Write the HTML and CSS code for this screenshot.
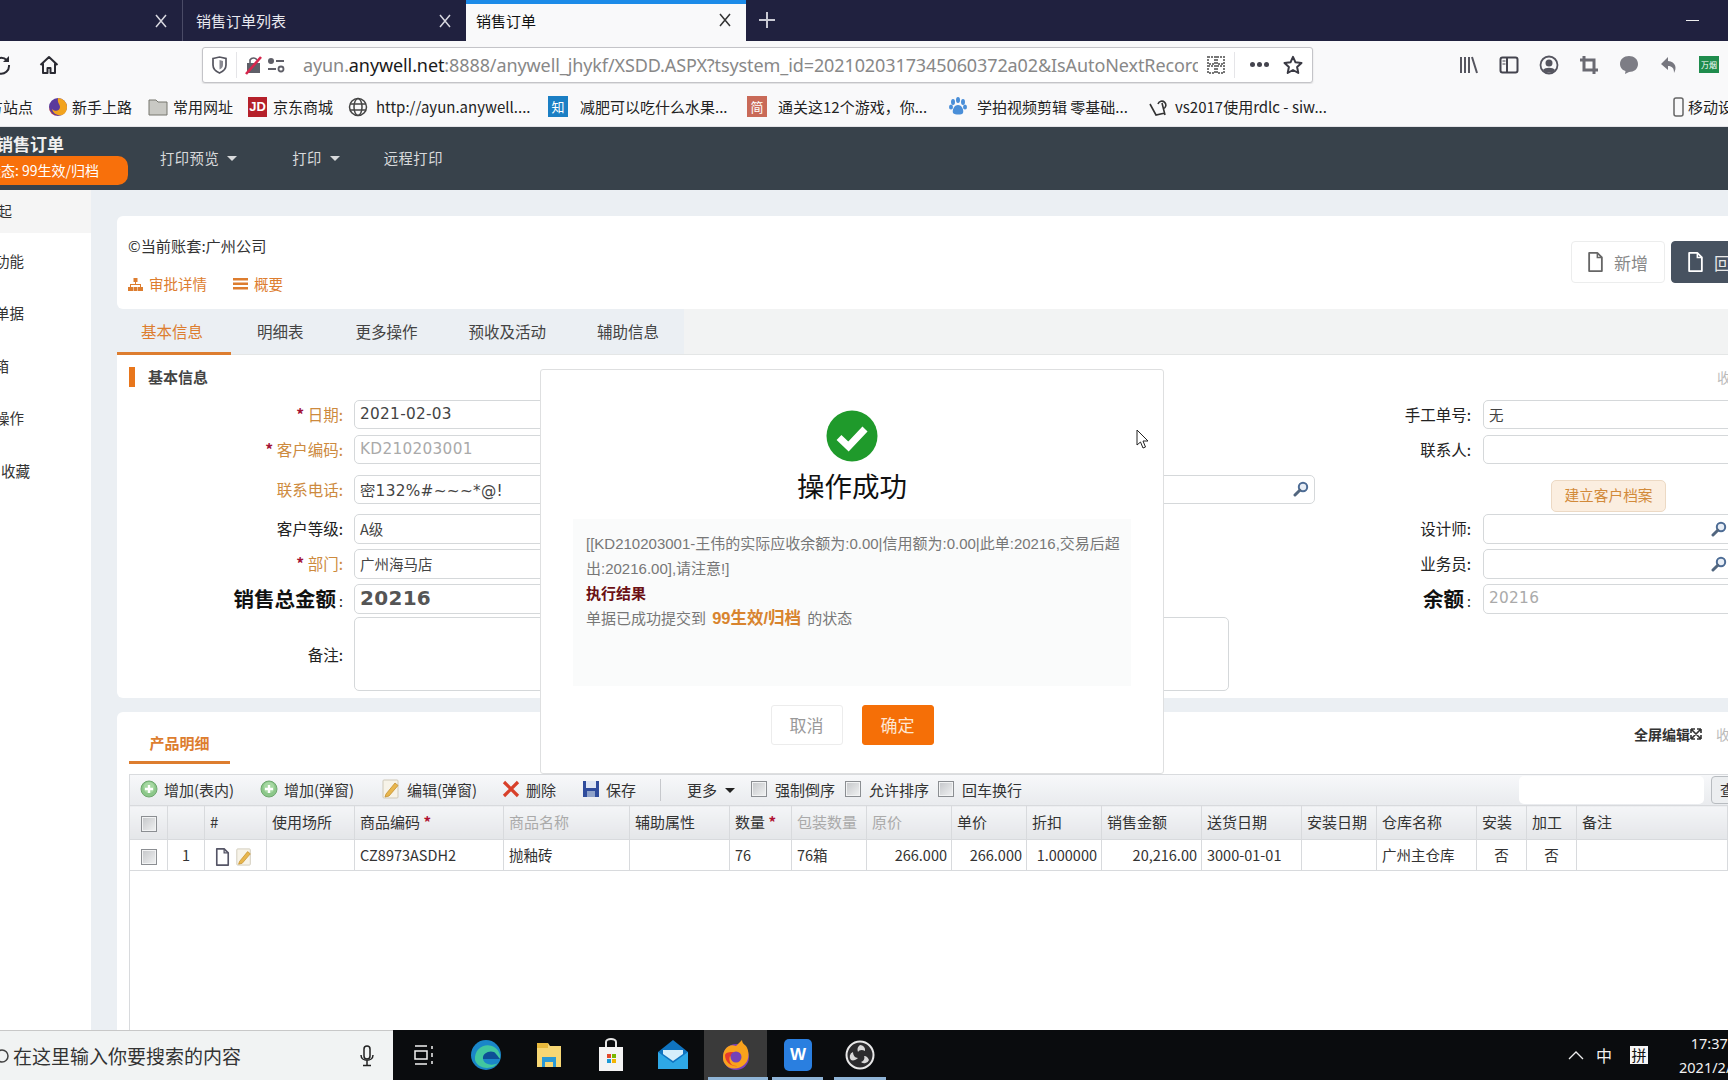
FILE: index.html
```html
<!DOCTYPE html>
<html lang="zh-CN">
<head>
<meta charset="utf-8">
<title>销售订单</title>
<link rel="stylesheet" href="styles.css">
</head>
<body>
<svg class="defs" width="0" height="0" aria-hidden="true">
  <symbol id="i-search" viewBox="0 0 16 16"><circle cx="10" cy="6" r="4.2" fill="#e8eef6" stroke="#4d6c95" stroke-width="2"/><path d="M6.8 9.2 2 14" stroke="#52667f" stroke-width="3" stroke-linecap="round"/></symbol>
  <symbol id="i-add" viewBox="0 0 18 18"><circle cx="9" cy="9" r="8" fill="#8cc78a" stroke="#6fa86f"/><circle cx="9" cy="7.5" r="5.5" fill="#a6d8a2"/><path d="M9 5v8M5 9h8" stroke="#fff" stroke-width="2.4"/></symbol>
  <symbol id="i-doc" viewBox="0 0 18 22"><path d="M2 1h9l5 5v15H2z" fill="none" stroke="currentColor" stroke-width="2" stroke-linejoin="round"/><path d="M11 1v5h5" fill="none" stroke="currentColor" stroke-width="1.6"/></symbol>
  <symbol id="i-edit" viewBox="0 0 20 20"><rect x="2" y="1" width="15" height="18" rx="1" fill="#f7f3e8" stroke="#cfc9b8"/><path d="M5 15 14 4l3 2.5L8 17l-4 1z" fill="#e8b64d" stroke="#c48f2d" stroke-width=".8"/></symbol>
  <symbol id="i-x" viewBox="0 0 14 14"><path d="M2 1l10 12M12 1 2 13" fill="none" stroke="currentColor" stroke-width="1.500"/></symbol>
</svg>

<header class="tabbar">
  <div class="tab tab-first"><svg class="tab-x" width="14" height="14"><use href="#i-x"/></svg></div>
  <div class="tab tab-mid"><span class="tab-label">销售订单列表</span><svg class="tab-x" width="14" height="14"><use href="#i-x"/></svg></div>
  <div class="tab tab-active"><span class="tab-label">销售订单</span><svg class="tab-x" width="14" height="14"><use href="#i-x"/></svg></div>
  <svg class="tab-plus" width="18" height="18" viewBox="0 0 18 18"><path d="M9 1v16M1 9h16" stroke="#c9cad4" stroke-width="2"/></svg>
  <div class="win-min"></div>
</header>

<nav class="toolbar">
  <svg class="reload" width="20" height="20" viewBox="0 0 20 20"><path d="M16 5.5A8 8 0 1 0 18 10" fill="none" stroke="#2b2b33" stroke-width="2"/><path d="M18 1v6h-6z" fill="#2b2b33"/></svg>
  <svg class="home" width="20" height="20" viewBox="0 0 20 20"><path d="M1.500 10 10 2l8.500 8M4 8.500V18h4.500v-5h3v5H16V8.500" fill="none" stroke="#2b2b33" stroke-width="2" stroke-linejoin="round"/></svg>
  <div class="urlbar">
    <svg class="shield" width="15" height="18" viewBox="0 0 15 18"><path d="M1 2.500 7.500 1 14 2.500V9c0 4-3 6.500-6.500 8C4 15.500 1 13 1 9z" fill="none" stroke="#55555f" stroke-width="1.700"/><path d="M7.500 4 11 5v4c0 2-1.500 3.500-3.500 4.500z" fill="#8a8a92"/></svg>
    <span class="url-sep"></span>
    <svg class="lock-off" width="18" height="20" viewBox="0 0 18 20"><rect x="2" y="8" width="13" height="10" fill="#5f5f68"/><path d="M5 8V5a4 4 0 0 1 7 0" fill="none" stroke="#5f5f68" stroke-width="1.600"/><path d="M1 19 16 2" stroke="#d7264d" stroke-width="2.600"/></svg>
    <svg class="perm" width="18" height="16" viewBox="0 0 18 16"><circle cx="4" cy="4" r="3" fill="#5f5f68"/><path d="M9 4h8M1 12h8" stroke="#5f5f68" stroke-width="2"/><circle cx="14" cy="12" r="2.500" fill="none" stroke="#5f5f68" stroke-width="1.800"/></svg>
    <div class="url-text">ayun.<b>anywell.net</b>:8888/anywell_jhykf/XSDD.ASPX?tsystem_id=2021020317345060372a02&amp;IsAutoNextRecord=1</div>
    <svg class="qr" width="18" height="18" viewBox="0 0 18 18"><path d="M1 1h7v7H1zM10 1h7v7h-7zM1 10h7v7H1zM10 10h7v7h-7z" fill="none" stroke="#777" stroke-width="2" stroke-dasharray="2 1"/></svg>
    <span class="url-sep url-sep-r"></span>
    <span class="dots"><i></i><i></i><i></i></span>
    <svg class="star" width="20" height="20" viewBox="0 0 20 20"><path d="m10 1.800 2.500 5.500 6 .7-4.400 4 1.200 6L10 15l-5.300 3 1.200-6-4.400-4 6-.7z" fill="none" stroke="#3a3a44" stroke-width="2" stroke-linejoin="round"/></svg>
  </div>
  <div class="tools">
    <svg width="20" height="20" viewBox="0 0 20 20"><path d="M2 2v16M6 2v16M10 2v16M13 2l5 16" stroke="#55555f" stroke-width="2" fill="none"/></svg>
    <svg width="20" height="20" viewBox="0 0 20 20"><rect x="1.500" y="2.500" width="17" height="15" rx="2" fill="none" stroke="#44444e" stroke-width="2"/><path d="M8 3v14" stroke="#44444e" stroke-width="2"/><path d="M3.500 6h3M3.500 9h3" stroke="#44444e"/></svg>
    <svg width="20" height="20" viewBox="0 0 20 20"><circle cx="10" cy="10" r="8.500" fill="none" stroke="#55555f" stroke-width="1.800"/><circle cx="10" cy="8" r="3.500" fill="#55555f"/><path d="M4 15c2-3 10-3 12 0l-3 2.500H7z" fill="#55555f"/></svg>
    <svg width="20" height="20" viewBox="0 0 20 20"><path d="M5 1v14h14M1 5h14v14" fill="none" stroke="#6a6a72" stroke-width="3"/></svg>
    <svg width="20" height="20" viewBox="0 0 20 20"><path d="M10 1c5 0 9 3 9 8s-4 8-9 8l-4 2 .5-3C3 15 1 12 1 9c0-5 4-8 9-8z" fill="#7d7d85"/></svg>
    <svg width="20" height="20" viewBox="0 0 20 20"><path d="M9 2 2 9l7 6v-4c4 0 6 2 6 7 3-5 2-11-6-12z" fill="#77777f"/></svg>
    <span class="wan">万烟</span>
  </div>
</nav>

<nav class="bookmarks">
  <span class="bm bm-a">火狐官方站点</span>
  <span class="bm bm-b"><svg width="20" height="20" viewBox="0 0 20 20"><circle cx="10" cy="10" r="9" fill="#5a3a9c"/><path d="M10 1a9 9 0 0 1 9 9c0 4-2 7-5 8-4 1-9-1-10-6 3 3 8 2 8-2 0-3-3-4-2-9z" fill="#f2a31e"/><path d="M1 10c1 5 4 8 9 9-5 0-9-4-9-9z" fill="#d93a2b"/></svg>新手上路</span>
  <span class="bm bm-c"><svg width="20" height="18" viewBox="0 0 20 18"><path d="M1 2h7l2 2h9v13H1z" fill="#c9c9c4" stroke="#77776f"/></svg>常用网址</span>
  <span class="bm bm-d"><span class="jd">JD</span>京东商城</span>
  <span class="bm bm-e"><svg width="20" height="20" viewBox="0 0 20 20"><g fill="none" stroke="#444" stroke-width="1.500"><circle cx="10" cy="10" r="8.500"/><ellipse cx="10" cy="10" rx="4" ry="8.500"/><path d="M2 7h16M2 13h16"/></g></svg>http://ayun.anywell....</span>
  <span class="bm bm-f"><span class="zhi">知</span>减肥可以吃什么水果...</span>
  <span class="bm bm-g"><span class="jian">简</span>通关这12个游戏，你...</span>
  <span class="bm bm-h"><svg width="18" height="20" viewBox="0 0 18 20"><g fill="#4a8fd8"><ellipse cx="4" cy="5" rx="2" ry="3"/><ellipse cx="9" cy="3" rx="2" ry="3"/><ellipse cx="14" cy="5" rx="2" ry="3"/><ellipse cx="2" cy="10" rx="2" ry="2.500"/><ellipse cx="16" cy="10" rx="2" ry="2.500"/><path d="M9 8c4 0 6 5 5 8-1 2-8 2-10 0-1-3 1-8 5-8z"/></g></svg>学拍视频剪辑 零基础...</span>
  <span class="bm bm-i"><svg width="18" height="20" viewBox="0 0 18 20"><path d="M1 7l6 11 9-2M9 7a4 4 0 1 1 5 5M13 6l3 12" fill="none" stroke="#333" stroke-width="1.600"/></svg>vs2017使用rdlc - siw...</span>
  <span class="bm bm-j"><svg width="11" height="20" viewBox="0 0 11 20"><rect x="1" y="1" width="9" height="18" rx="2" fill="none" stroke="#666" stroke-width="1.500"/></svg>移动设备书签</span>
</nav>

<section class="app-head">
  <div class="title-block">
    <div class="doc-title">销售订单</div>
    <div class="status-pill"><span>状态: 99生效/归档</span></div>
  </div>
  <span class="menu menu-a">打印预览<i class="caret"></i></span>
  <span class="menu menu-b">打印<i class="caret"></i></span>
  <span class="menu menu-c">远程打印</span>
</section>

<div class="main">
  <aside class="sidebar">
    <div class="side-item side-first side-e12">收起</div>
    <div class="side-item side-e24">常用功能</div>
    <div class="side-item side-e24">单据</div>
    <div class="side-item side-e9">信箱</div>
    <div class="side-item side-e24">操作</div>
    <div class="side-item side-e30">收藏</div>
  </aside>

  <main class="content">
    <section class="card card-top">
      <div class="top-left">
        <div class="account">©当前账套:广州公司</div>
        <div class="links">
          <span class="link"><svg width="15" height="13" viewBox="0 0 15 13"><path d="M5.500 0h4v4h-4zM7 4h1v3H7zM2 6h11v3h-1V7H3v2H2zM0 9h5v4H0zM5.500 9h4v4h-4zM10 9h5v4h-5z" fill="#dd7d2f"/></svg>审批详情</span>
          <span class="link link-2"><svg width="15" height="12" viewBox="0 0 15 12"><path d="M0 0h15v2.500H0zM0 4.500h15V7H0zM0 9h15v2.500H0z" fill="#dd7d2f"/></svg>概要</span>
        </div>
      </div>
      <div class="top-btns">
        <span class="btn-page"><svg class="ic-doc" width="17" height="20"><use href="#i-doc"/></svg>新增</span>
        <span class="btn-page btn-dark"><svg class="ic-doc" width="17" height="20"><use href="#i-doc"/></svg>回到列表</span>
      </div>
    </section>

    <div class="tabstrip">
      <div class="tabs">
        <span class="ptab ptab-active">基本信息</span>
        <span class="ptab ptab-b">明细表</span>
        <span class="ptab ptab-c">更多操作</span>
        <span class="ptab ptab-d">预收及活动</span>
        <span class="ptab ptab-e">辅助信息</span>
      </div>
    </div>

    <section class="card card-form">
      <div class="sec-head"><span class="sec-bar"></span><span class="sec-title">基本信息</span><span class="collapse">收起</span></div>
      <div class="form">
        <label class="lab lab-req r1"><em>*</em> 日期:</label>
        <div class="field f-a r1 mono">2021-02-03</div>
        <label class="lab lab-r r1">手工单号:</label>
        <div class="field f-r r1">无</div>

        <label class="lab lab-req r2"><em>*</em> 客户编码:</label>
        <div class="field f-a r2 mono dim">KD210203001</div>
        <label class="lab lab-r r2">联系人:</label>
        <div class="field f-r r2"></div>

        <label class="lab lab-req r3">联系电话:</label>
        <div class="field f-wide r3"><span class="mono">密132%#~~~*@!</span><svg class="search" width="16" height="16"><use href="#i-search"/></svg></div>
        <div class="cust-cell r3"><span class="cust-btn">建立客户档案</span></div>

        <label class="lab r4">客户等级:</label>
        <div class="field f-a r4">A级</div>
        <label class="lab lab-r r4">设计师:</label>
        <div class="field f-r r4"><svg class="search search-r" width="16" height="16"><use href="#i-search"/></svg></div>

        <label class="lab lab-req r5"><em>*</em> 部门:</label>
        <div class="field f-a r5">广州海马店</div>
        <label class="lab lab-r r5">业务员:</label>
        <div class="field f-r r5"><svg class="search search-r" width="16" height="16"><use href="#i-search"/></svg></div>

        <label class="lab lab-big r6"><b>销售总金额</b>:</label>
        <div class="field f-a r6 mono total">20216</div>
        <label class="lab lab-r lab-big r6"><b>余额</b>:</label>
        <div class="field f-r r6 mono dim">20216</div>

        <label class="lab r7">备注:</label>
        <div class="field f-note r7"></div>
      </div>
    </section>

    <section class="card card-detail">
      <div class="detail-head">
        <span class="detail-tab">产品明细</span>
        <span class="fullscreen">全屏编辑<svg width="12" height="12" viewBox="0 0 12 12"><path d="M1 1l10 10M11 1 1 11M1 1h4M1 1v4M11 1H7M11 1v4M1 11h4M1 11V7M11 11H7M11 11V7" stroke="#333" stroke-width="1.600" fill="none"/></svg></span>
        <span class="collapse-2">收起</span>
      </div>
      <div class="grid-bar">
        <span class="gb gb-1"><svg width="18" height="18"><use href="#i-add"/></svg>增加(表内)</span>
        <span class="gb gb-2"><svg width="18" height="18"><use href="#i-add"/></svg>增加(弹窗)</span>
        <span class="gb gb-3"><svg width="20" height="20"><use href="#i-edit"/></svg>编辑(弹窗)</span>
        <span class="gb gb-4"><svg width="18" height="18" viewBox="0 0 18 18"><path d="M2 2l14 14M16 2 2 16" stroke="#d8402a" stroke-width="3.200"/></svg>删除</span>
        <span class="gb gb-5"><svg width="18" height="18" viewBox="0 0 18 18"><path d="M1 1h16v16H1z" fill="#2f4c9c"/><path d="M4 1h10v7H4z" fill="#dfe6f4"/><path d="M5 11h8v6H5z" fill="#8fa2c9"/></svg>保存</span>
        <span class="gb-sep"></span>
        <span class="gb gb-more">更多<i class="caret caret-dark"></i></span>
        <span class="gb gb-c1"><i class="chk"></i>强制倒序</span>
        <span class="gb gb-c2"><i class="chk"></i>允许排序</span>
        <span class="gb gb-c3"><i class="chk"></i>回车换行</span>
        <span class="gb-search"></span>
        <span class="gb-find">查询</span>
      </div>
      <table class="grid">
        <thead>
          <tr>
            <th><i class="chk chk-t"></i></th><th></th><th>#</th><th>使用场所</th><th>商品编码 <em>*</em></th><th class="off">商品名称</th><th>辅助属性</th><th>数量 <em>*</em></th><th class="off">包装数量</th><th class="off">原价</th><th>单价</th><th>折扣</th><th>销售金额</th><th>送货日期</th><th>安装日期</th><th>仓库名称</th><th>安装</th><th>加工</th><th>备注</th>
          </tr>
        </thead>
        <tbody>
          <tr>
            <td><i class="chk chk-t"></i></td><td class="ctr">1</td>
            <td class="ops"><svg class="row-doc" width="15" height="18"><use href="#i-doc"/></svg><svg width="18" height="18"><use href="#i-edit"/></svg></td>
            <td></td><td>CZ8973ASDH2</td><td>抛釉砖</td><td></td><td>76</td><td>76箱</td><td class="num">266.000</td><td class="num">266.000</td><td class="num">1.000000</td><td class="num">20,216.00</td><td>3000-01-01</td><td></td><td>广州主仓库</td><td class="ctr">否</td><td class="ctr">否</td><td></td>
          </tr>
        </tbody>
      </table>
      <div class="grid-empty"></div>
    </section>
  </main>
</div>

<footer class="taskbar">
  <div class="tb-search">
    <svg class="tb-lens" width="14" height="20" viewBox="0 0 14 20"><circle cx="2" cy="10" r="6" fill="none" stroke="#444" stroke-width="1.500"/></svg>
    <span class="tb-hint">在这里输入你要搜索的内容</span>
    <svg class="tb-mic" width="14" height="22" viewBox="0 0 14 22"><rect x="4" y="1" width="6" height="13" rx="3" fill="none" stroke="#222" stroke-width="1.500"/><path d="M1 10c0 7 12 7 12 0M7 16v4M3 20.500h8" fill="none" stroke="#222" stroke-width="1.500"/></svg>
  </div>
  <div class="tb-icons">
    <span class="tb-ic tb-view"><svg width="20" height="20" viewBox="0 0 20 20"><path d="M1 1h12M1 19h12M1 6h12v8H1zM18 1v3M18 8v4M18 16v3" fill="none" stroke="#f2f2f2" stroke-width="1.500"/></svg></span>
    <span class="tb-ic"><svg width="32" height="32" viewBox="0 0 32 32"><circle cx="16" cy="16" r="15" fill="#1a86c8"/><path d="M5 21C4 10 14 4 22 7c6 2 9 8 8 13H13c1 6 10 7 15 4-5 7-20 7-23-3z" fill="#41c7a0"/><path d="M13 20c-1-7 10-10 13-5 2 2 3 4 4 5z" fill="#0e4f96"/></svg></span>
    <span class="tb-ic"><svg width="30" height="30" viewBox="0 0 30 30"><path d="M3 3h11l2 3h11v21H3z" fill="#f7d774"/><path d="M3 3h11v5H3z" fill="#e8b93c"/><path d="M8 27V17h14v10h-3v-5h-8v5z" fill="#2a9ad6"/></svg></span>
    <span class="tb-ic"><svg width="28" height="34" viewBox="0 0 28 34"><path d="M9 9V4a5 3 0 0 1 10 0v5" fill="none" stroke="#e5e5e5" stroke-width="2"/><rect x="2" y="9" width="24" height="24" fill="#f4f4f4"/><path d="M10 16h4v4h-4z" fill="#e2492b"/><path d="M15 16h4v4h-4z" fill="#7ab800"/><path d="M10 21h4v4h-4z" fill="#1e9ad6"/><path d="M15 21h4v4h-4z" fill="#f4b400"/></svg></span>
    <span class="tb-ic"><svg width="32" height="30" viewBox="0 0 32 30"><path d="M1 12 16 0l15 12v17H1z" fill="#0f74c0"/><path d="M1 12l15 11 15-11v17H1z" fill="#2ea8e6"/><path d="M6 10h20v4l-10 7-10-7z" fill="#d5eefb"/></svg></span>
    <span class="tb-ic tb-ff"><svg width="32" height="32" viewBox="0 0 32 32"><circle cx="16" cy="18" r="13" fill="#7b3fbe"/><path d="M3 18C3 10 9 4 16 7l6-6c0 3 2 4 4 6 3 4 4 13-1 18-6 6-16 6-20 0-2-2-2-5-2-7z" fill="#f9a21c"/><path d="M5 16c0 7 6 12 13 11C11 28 8 22 10 17c2 2 6 2 7 0s-3-3-4-4c-3 0-7 0-8 3z" fill="#e6392f"/><circle cx="16" cy="18" r="5.500" fill="#7542b8"/></svg></span>
    <span class="tb-ic"><span class="wps">W</span></span>
    <span class="tb-ic"><svg width="30" height="30" viewBox="0 0 30 30"><circle cx="15" cy="15" r="13.500" fill="#2c2c2e" stroke="#e8e8e8" stroke-width="2"/><path d="M15 5a5 5 0 0 1 5 6c-3-2-6-1-7 1a6 6 0 0 1 2-7zM24 20a5 5 0 0 1-8 2c3-1 4-4 3-6 3 0 4 2 5 4zM6 20a5 5 0 0 1 2-8c0 3 2 6 5 6-2 2-5 3-7 2z" fill="#d8d8d8"/></svg></span>
    <span class="tb-run run-1"></span><span class="tb-run run-2"></span><span class="tb-run run-3"></span>
  </div>
  <div class="tb-tray">
    <svg class="tray-up" width="16" height="9" viewBox="0 0 16 9"><path d="M1 8l7-7 7 7" fill="none" stroke="#eee" stroke-width="1.300"/></svg>
    <span class="ime">中</span>
    <span class="ime-box">拼</span>
    <div class="clock"><div>17:37</div><div>2021/2/3</div></div>
  </div>
</footer>

<div class="modal">
  <div class="ok-icon"><svg width="52" height="52" viewBox="0 0 52 52"><circle cx="26" cy="26" r="25.500" fill="#1f9a2b"/><path d="M13 27.500 22.500 36.500 39 19" fill="none" stroke="#fff" stroke-width="7"/></svg></div>
  <div class="modal-title">操作成功</div>
  <div class="modal-msg">
    <div class="msg-line">[[KD210203001-王伟的实际应收余额为:0.00|信用额为:0.00|此单:20216,交易后超出:20216.00],请注意!]</div>
    <div class="msg-head">执行结果</div>
    <div class="msg-line">单据已成功提交到 <b class="msg-state">99生效/归档</b> 的状态</div>
  </div>
  <div class="modal-btns">
    <span class="m-btn m-cancel">取消</span>
    <span class="m-btn m-ok">确定</span>
  </div>
</div>
<svg class="cursor" width="13" height="20" viewBox="0 0 13 20"><path d="M1 1v15l3.500-3 2.500 6 2.500-1-2.500-6h5z" fill="#fff" stroke="#222" stroke-width="1"/></svg>
</body>
</html>
```
FILE: styles.css
```css
* { box-sizing: border-box; }
html, body { margin: 0; height: 100%; }
body {
  width: 1728px; height: 1080px; overflow: hidden; position: relative;
  display: flex; flex-direction: column;
  font-family: "Noto Sans CJK SC", "Noto Sans", sans-serif;
  font-size: 14px; color: #333; background: #ebeff3;
}
.defs { position: absolute; }
em { font-style: normal; }

/* browser tab bar */
.tabbar { height: 41px; flex: none; background: #20213f; display: flex; align-items: stretch; color: #e8e8ee; font-size: 15px; }
.tab { display: flex; align-items: center; position: relative; padding-left: 13px; }
.tab-first { width: 183px; border-right: 1px solid #4a4b66; }
.tab-mid { width: 283px; }
.tab-active { width: 280px; background: #f9f9fa; color: #111; border-top: 4px solid #1c8be8; padding: 0 0 5px 10px; }
.tab-x { margin-left: auto; margin-right: 14px; color: #d8d8e0; flex: none; }
.tab-active .tab-x { color: #333; }
.tab-plus { margin: 11px 0 0 12px; }
.win-min { width: 13px; height: 1px; background: #eee; margin: 20px 29px 0 auto; }

/* toolbar */
.toolbar { height: 43px; flex: none; background: #f9f9fa; display: flex; align-items: center; padding-top: 4px; }
.reload { margin-left: -9px; flex: none; }
.home { margin-left: 28px; flex: none; }
.urlbar { width: 1111px; height: 36px; margin-left: 143px; background: #fff; border: 1px solid #c4c4c8; border-radius: 3px; display: flex; align-items: center; box-shadow: 0 1px 2px rgba(0,0,0,.12); flex: none; }
.shield { margin-left: 9px; flex: none; }
.url-sep { width: 1px; height: 26px; background: #e5e5e8; margin-left: 9px; flex: none; }
.lock-off { margin-left: 8px; flex: none; }
.perm { margin-left: 4px; flex: none; }
.url-text { margin-left: 18px; width: 895px; flex: none; overflow: hidden; white-space: nowrap; font-family: "Noto Sans", sans-serif; font-size: 18px; letter-spacing: -.1px; color: #888; }
.url-text b { font-weight: 400; color: #1a1a1a; }
.qr { margin-left: 9px; flex: none; }
.url-sep-r { margin-left: 9px; }
.dots { display: flex; gap: 2px; margin-left: 15px; }
.dots i { width: 5px; height: 5px; border-radius: 50%; background: #44444e; }
.star { margin-left: 14px; flex: none; }
.tools { display: flex; align-items: center; gap: 20px; margin-left: 146px; flex: none; }
.wan { width: 20px; height: 17px; background: #1f8c4d; color: #fff; font-size: 8px; line-height: 17px; text-align: center; white-space: nowrap; overflow: hidden; }

/* bookmarks */
.bookmarks { height: 43px; flex: none; background: #f9f9fa; display: flex; align-items: center; font-size: 15px; color: #222; white-space: nowrap; border-bottom: 1px solid #e4e4e8; padding-top: 3px; }
.bm { display: inline-flex; align-items: center; flex: none; overflow: hidden; height: 24px; }
.bm-a { width: 33px; justify-content: flex-end; margin-right: 15px; }
.bm-b { width: 100px; gap: 4px; }
.bm-c { width: 100px; gap: 5px; }
.bm-d { width: 100px; gap: 6px; }
.bm-e { width: 200px; gap: 8px; }
.bm-f { width: 199px; gap: 12px; }
.bm-g { width: 202px; gap: 11px; }
.bm-h { width: 200px; gap: 10px; }
.bm-i { width: 524px; gap: 8px; }
.bm-j { gap: 4px; }
.jd { width: 19px; height: 20px; background: #b5202a; color: #fff; font: 700 13px/20px "Liberation Sans", sans-serif; text-align: center; flex: none; }
.zhi { width: 20px; height: 21px; background: #1b7fc4; color: #fff; font-size: 13px; line-height: 21px; text-align: center; flex: none; }
.jian { width: 20px; height: 21px; background: #c96a58; color: #fff; font-size: 13px; line-height: 21px; text-align: center; flex: none; }
.bm svg { flex: none; }

/* application header */
.app-head { height: 63px; flex: none; background: #38424b; color: #d8dadc; display: flex; align-items: center; position: relative; }
.title-block { width: 128px; flex: none; }
.doc-title { font-size: 17px; font-weight: 700; color: #f0f0f0; margin-left: -4px; line-height: 24px; white-space: nowrap; }
.status-pill { height: 29px; width: 128px; background: #f8700b; color: #fff; border-radius: 0 10px 10px 0; font-size: 14px; line-height: 29px; display: flex; justify-content: flex-end; padding-right: 29px; white-space: nowrap; overflow: hidden; }
.status-pill span { flex: none; }
.menu { font-size: 14.300px; white-space: nowrap; display: inline-flex; align-items: center; letter-spacing: .5px; margin-top: -3px; }
.menu-a { margin-left: 32px; }
.menu-b { margin-left: 55px; }
.menu-c { margin-left: 44px; }
.caret { display: inline-block; width: 0; height: 0; border-left: 5px solid transparent; border-right: 5px solid transparent; border-top: 5px solid #d8dadc; margin-left: 8px; margin-top: 3px; }
.caret-dark { border-top-color: #222; }

/* layout */
.main { flex: 1; min-height: 0; display: flex; overflow: hidden; }
.sidebar { width: 91px; flex: none; background: #fff; overflow: hidden; font-size: 14.500px; color: #333; }
.side-item { height: 52.400px; line-height: 52.400px; white-space: nowrap; display: flex; justify-content: flex-end; overflow: hidden; }
.side-first { height: 43px; line-height: 42px; background: #f5f5f5; margin-bottom: 2px; }
.side-e12 { padding-right: 79px; }
.side-e24 { padding-right: 67px; }
.side-e9 { padding-right: 82px; }
.side-e30 { padding-right: 61px; }
.content { flex: none; width: 1637px; padding: 26px 0 0 26px; overflow: hidden; display: flex; flex-direction: column; }
.card { background: #fff; width: 1640px; flex: none; }

/* top card */
.card-top { height: 93px; border-radius: 6px 0 0 6px; display: flex; }
.top-left { padding: 18px 0 0 11px; width: 1454px; flex: none; }
.account { font-size: 15.200px; color: #333; line-height: 22px; }
.links { margin-top: 17px; display: flex; color: #dd7d2f; font-size: 14.500px; line-height: 22px; }
.link { display: inline-flex; align-items: center; gap: 6px; }
.link-2 { margin-left: 26px; }
.top-btns { display: flex; gap: 6px; padding-top: 25px; flex: none; }
.btn-page { height: 42px; display: inline-flex; align-items: center; background: #fff; border: 1px solid #eceded; border-radius: 4px; color: #888; font-size: 17px; padding: 0 15px; gap: 10px; white-space: nowrap; flex: none; width: 94px; }
.btn-dark { background: #475260; color: #e8e8e8; border-color: #475260; width: 158px; }
.ic-doc { color: #666; flex: none; }
.btn-dark .ic-doc { color: #fff; }

/* page tabs */
.tabstrip { height: 46px; flex: none; background: #f2f3f3; width: 1640px; border-bottom: 1px solid #e4e6e6; }
.tabs { width: 567px; height: 45px; background: #ebeff3; display: flex; font-size: 15.500px; color: #444; line-height: 45px; position: relative; }
.ptab { white-space: nowrap; }
.ptab-active { width: 114px; padding-right: 4px; text-align: center; color: #dd7d2f; border-bottom: 3px solid #dd7d2f; height: 46px; flex: none; }
.ptab-b { margin-left: 26px; }
.ptab-c { margin-left: 52px; }
.ptab-d { margin-left: 51px; }
.ptab-e { margin-left: 51px; }

/* form card */
.card-form { height: 343px; border-radius: 0 0 0 6px; }
.sec-head { height: 45px; display: flex; align-items: flex-start; padding: 12px 0 0 12px; position: relative; }
.sec-bar { width: 6px; height: 20px; background: #e8761c; }
.sec-title { font-weight: 700; font-size: 15px; color: #444; margin-left: 13px; line-height: 20px; }
.collapse { position: absolute; left: 1600px; top: 12px; color: #bbb; font-size: 14px; }
.form { display: grid; grid-template-columns: 237px 400px 475px 86px 168px 270px; grid-template-rows: 35px 40px 39px 35px 35px 33px 74px; }
.lab { grid-column: 1; text-align: right; padding-right: 11px; height: 29px; line-height: 29px; white-space: nowrap; color: #222; font-size: 15.500px; }
.lab em { color: #a31437; font-weight: 700; }
.lab-req { color: #cd8a3e; }
.lab-r { grid-column: 5; padding-right: 12px; }
.lab-big { font-size: 14px; color: #222; }
.lab-big b { font-size: 20.500px; color: #111; margin-right: 3px; }
.r1 { grid-row: 1; } .r2 { grid-row: 2; } .r3 { grid-row: 3; } .r4 { grid-row: 4; } .r5 { grid-row: 5; } .r6 { grid-row: 6; } .r7 { grid-row: 7; }
.lab.r7 { align-self: center; }
.field { height: 29px; background: #fff; border: 1px solid #d5d8da; border-radius: 5px; line-height: 27px; padding-left: 5px; color: #444; font-size: 14.500px; position: relative; white-space: nowrap; overflow: hidden; }
.r4.field, .r5.field, .r6.field { height: 30px; }
.mono { font-family: "DejaVu Sans", "Noto Sans CJK SC", sans-serif; font-size: 15.300px; letter-spacing: .3px; }
.dim { color: #aaa; }
.total { font-weight: 700; font-size: 20px; color: #555; }
.f-a { grid-column: 2; }
.f-r { grid-column: 6; }
.f-wide { grid-column: 2 / span 3; }
.f-note { grid-column: 2 / span 2; height: 74px; }
.search { position: absolute; right: 5px; top: 5px; }
.search-r { right: auto; left: 227px; top: 6px; }
.cust-cell { grid-column: 5 / span 2; padding: 5px 0 0 236px; }
.cust-btn { display: block; width: 115px; height: 32px; background: #fbeee0; border: 1px solid #ecd9c4; border-radius: 5px; color: #d28a3a; font-size: 14.700px; line-height: 27px; text-align: center; white-space: nowrap; }

/* detail card */
.card-detail { margin-top: 14px; flex: 1; padding: 0 0 0 12px; border-radius: 6px 0 0 0; position: relative; }
.detail-head { height: 62px; position: relative; }
.detail-tab { display: block; width: 101px; height: 52px; line-height: 62px; text-align: center; color: #dd7d2f; font-weight: 700; font-size: 15px; border-bottom: 3px solid #dd7d2f; }
.fullscreen { position: absolute; left: 1505px; top: 12px; font-weight: 700; font-size: 14px; color: #333; display: inline-flex; align-items: center; white-space: nowrap; }
.collapse-2 { position: absolute; left: 1587px; top: 12px; color: #bbb; white-space: nowrap; }
.grid-bar { height: 31px; width: 1640px; background: linear-gradient(#f7f8fa, #e9ebee); border: 1px solid #d9dbde; border-width: 1px 0 0 1px; display: flex; align-items: center; font-size: 15px; color: #333; position: relative; white-space: nowrap; }
.gb { display: inline-flex; align-items: center; gap: 6px; position: absolute; top: 2px; height: 24px; }
.gb-1 { left: 10px; } .gb-2 { left: 130px; } .gb-3 { left: 251px; } .gb-4 { left: 372px; } .gb-5 { left: 452px; }
.gb-sep { position: absolute; left: 530px; top: 4px; width: 1px; height: 22px; background: #c6c8cc; }
.gb-more { left: 557px; gap: 0; }
.gb-c1 { left: 621px; gap: 8px; } .gb-c2 { left: 715px; gap: 8px; } .gb-c3 { left: 808px; gap: 8px; }
.chk { display: inline-block; width: 16px; height: 16px; background: linear-gradient(135deg, #c4c6c9, #f1f2f3); border: 1px solid #8b8e92; box-shadow: inset 0 0 0 1px #f2f3f4; flex: none; }
.chk-t { margin-left: 3px; vertical-align: middle; }
.gb-search { position: absolute; left: 1389px; top: 1px; width: 185px; height: 28px; background: #fff; border-radius: 5px; }
.gb-find { position: absolute; left: 1581px; top: 1px; height: 28px; width: 60px; border: 1px solid #b8bcc0; border-radius: 4px; padding-left: 8px; line-height: 26px; background: #eceef0; }

.grid { border-collapse: collapse; table-layout: fixed; width: 1598px; font-size: 14.500px; }
.grid th, .grid td { border: 1px solid #d8dadd; padding: 0 0 2px 5px; white-space: nowrap; overflow: hidden; font-weight: 400; text-align: left; }
.grid th { height: 34px; background: linear-gradient(#f4f5f7, #e4e6e9); color: #333; font-size: 15px; }
.grid th.off { color: #aaa; }
.grid th em { color: #b01030; font-weight: 700; }
.grid td { height: 31px; background: #fff; color: #333; }
.grid th:first-child, .grid td:first-child { padding: 0 0 2px 8px; }
.grid tr > :nth-child(1) { width: 38px; } .grid tr > :nth-child(2) { width: 37px; } .grid tr > :nth-child(3) { width: 62px; }
.grid tr > :nth-child(4) { width: 88px; } .grid tr > :nth-child(5) { width: 149px; } .grid tr > :nth-child(6) { width: 126px; }
.grid tr > :nth-child(7) { width: 100px; } .grid tr > :nth-child(8) { width: 62px; } .grid tr > :nth-child(9) { width: 75px; }
.grid tr > :nth-child(10) { width: 85px; } .grid tr > :nth-child(11) { width: 75px; } .grid tr > :nth-child(12) { width: 75px; }
.grid tr > :nth-child(13) { width: 100px; } .grid tr > :nth-child(14) { width: 100px; } .grid tr > :nth-child(15) { width: 75px; }
.grid tr > :nth-child(16) { width: 100px; } .grid tr > :nth-child(17) { width: 50px; } .grid tr > :nth-child(18) { width: 50px; }
.grid tr > :nth-child(19) { width: 151px; }
.grid .ctr { text-align: center; padding: 0 0 2px; }
.grid .num { text-align: right; padding: 0 4px 2px 0; }
.grid .ops { padding: 0 0 0 10px; }
.ops svg { vertical-align: middle; }
.row-doc { color: #556; margin-right: 5px; }
.grid-empty { height: 200px; border-left: 1px solid #d8dadd; }

/* taskbar */
.taskbar { height: 50px; flex: none; background: #0a0c0e; display: flex; position: relative; color: #f2f2f2; }
.tb-search { width: 393px; height: 50px; background: #f1f3f3; border-top: 1px solid #c8c8c8; display: flex; align-items: center; flex: none; color: #333; }
.tb-lens { flex: none; }
.tb-hint { font-size: 19px; margin-left: -1px; white-space: nowrap; }
.tb-mic { margin-left: 119px; flex: none; }
.tb-icons { position: relative; display: flex; align-items: center; flex: none; width: 500px; }
.tb-ic { flex: none; width: 62.300px; display: flex; justify-content: center; align-items: center; height: 50px; }
.tb-ff { background: #3a3a3a; }
.wps { width: 28px; height: 32px; background: #2a7fe0; border-radius: 5px; color: #fff; font: 700 17px/32px "Liberation Sans", sans-serif; text-align: center; }
.tb-run { position: absolute; bottom: 0; height: 3px; background: #8fb4d6; }
.run-1 { left: 315px; width: 60px; } .run-2 { left: 379px; width: 51px; } .run-3 { left: 441px; width: 52px; }
.tb-tray { flex: 1; display: flex; align-items: center; position: relative; }
.tray-up { margin-left: 675px; flex: none; }
.ime { font-size: 16px; margin-left: 12px; }
.ime-box { width: 18px; height: 18px; background: #f6f6f6; color: #111; font-size: 15px; line-height: 18px; text-align: center; margin-left: 18px; flex: none; }
.clock { margin-left: 31px; text-align: center; font-family: "Noto Sans", sans-serif; font-size: 14.500px; line-height: 24px; white-space: nowrap; flex: none; }

/* dialog */
.modal { position: absolute; left: 540px; top: 369px; width: 624px; height: 405px; background: #fff; border: 1px solid #dedfe0; border-radius: 3px; display: flex; flex-direction: column; align-items: center; padding-top: 40px; }
.ok-icon { height: 52px; }
.ok-icon svg { display: block; }
.modal-title { font-size: 27.500px; line-height: 40px; color: #111; margin-top: 3px; }
.modal-msg { width: 558px; height: 167px; margin-top: 14px; background: #fafbfb; padding: 12px 10px 0 13px; font-family: "Liberation Sans", "Noto Sans CJK SC", sans-serif; font-size: 15px; line-height: 25px; color: #777; }
.msg-head { font-weight: 700; color: #6b1014; }
.msg-state { color: #d8842e; font-size: 16.500px; margin: 0 2px; }
.modal-btns { display: flex; gap: 19px; margin-top: 19px; }
.m-btn { width: 72px; height: 40px; border-radius: 3px; font-size: 17px; line-height: 38px; text-align: center; }
.m-cancel { background: #fff; border: 1px solid #ececec; color: #999; }
.m-ok { background: #f56f07; border: 1px solid #f56f07; color: #fde6d2; }
.cursor { position: absolute; left: 1136px; top: 429px; }
```
